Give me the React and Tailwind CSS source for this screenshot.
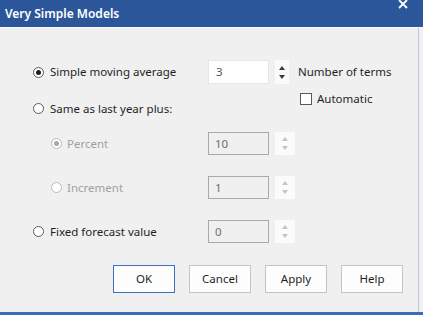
import React from 'react';

function Radio({ checked, disabled }) {
    const ring = disabled ? '#b9b9b9' : '#5a5a5a';
    const dot = disabled ? '#a8a8a8' : '#1f1f1f';
    return (
        <svg width="11" height="11" viewBox="0 0 11 11" className="shrink-0">
            <circle cx="5.5" cy="5.5" r="5" fill="#ffffff" stroke={ring} strokeWidth="1" />
            {checked && <circle cx="5.5" cy="5.5" r="2.5" fill={dot} />}
        </svg>
    );
}

function Spinner({ disabled, className }) {
    const c = disabled ? '#c4c4c4' : '#3a3a3a';
    return (
        <div className={`flex flex-col items-center justify-center gap-[5px] bg-[#fbfbfb] ${className}`}>
            <svg width="6" height="4" viewBox="0 0 6 4">
                <path d="M3 0 L6 4 L0 4 Z" fill={c} />
            </svg>
            <svg width="6" height="4" viewBox="0 0 6 4">
                <path d="M0 0 L6 0 L3 4 Z" fill={c} />
            </svg>
        </div>
    );
}

function DisabledField({ value }) {
    return (
        <div className="flex items-center">
            <div className="w-[61px] h-[23px] border border-[#a9a9a9] bg-[#f0f0f0] flex items-center pl-[6px] text-[#6e6e6e]">
                {value}
            </div>
            <Spinner disabled className="ml-[6px] w-[20px] h-[23px]" />
        </div>
    );
}

function Button({ label, primary }) {
    return (
        <button
            className={`w-[62px] h-[28px] bg-[#fdfdfd] border text-[#1f1f1f] ${
                primary ? 'border-[#3f70c0]' : 'border-[#c4c4c4]'
            }`}
        >
            {label}
        </button>
    );
}

export default function App() {
    return (
        <div className="w-[423px] h-[315px] bg-[#f0f0f0] flex flex-col font-['Noto_Sans',sans-serif] text-[11.5px] text-[#1f1f1f] overflow-hidden">
            {/* title bar */}
            <div className="h-[27px] bg-[#2b579a] flex items-start justify-between pl-[5px] pr-[15px] shrink-0">
                <span className="text-white font-semibold text-[12px] mt-[5px]">Very Simple Models</span>
                <svg width="10" height="9" viewBox="0 0 10 9" className="mt-[0px]">
                    <path d="M1 0 L9 8 M9 0 L1 8" stroke="#ffffff" strokeWidth="1.8" />
                </svg>
            </div>

            {/* body */}
            <div className="flex-1 flex flex-col border-t border-[#f7f9fc]">
                <div className="flex-1 flex flex-col mr-[4px] border-r border-[#b7c6dc] pl-[33px]">
                    {/* simple moving average */}
                    <div className="flex items-center h-[24px] mt-[32px]">
                        <div className="w-[175px] flex items-center gap-[6px]">
                            <Radio checked />
                            <span>Simple moving average</span>
                        </div>
                        <div className="w-[61px] h-[24px] bg-white border border-[#e6e6e6] flex items-center pl-[7px] text-[#555]">
                            3
                        </div>
                        <Spinner className="ml-[6px] w-[14px] h-[24px]" />
                        <span className="ml-[9px]">Number of terms</span>
                    </div>

                    {/* same as last year + automatic */}
                    <div className="flex items-start h-[26px] mt-[6px]">
                        <div className="w-[267px] flex items-center gap-[6px] mt-[10px]">
                            <Radio />
                            <span>Same as last year plus:</span>
                        </div>
                        <div className="flex items-center gap-[5px]">
                            <div className="w-[12px] h-[12px] bg-white border border-[#5a5a5a]" />
                            <span>Automatic</span>
                        </div>
                    </div>

                    {/* percent */}
                    <div className="flex items-center h-[23px] mt-[16px]">
                        <div className="w-[175px] flex items-center gap-[5px] pl-[18px] text-[#a0a0a0]">
                            <Radio checked disabled />
                            <span>Percent</span>
                        </div>
                        <DisabledField value="10" />
                    </div>

                    {/* increment */}
                    <div className="flex items-center h-[23px] mt-[21px]">
                        <div className="w-[175px] flex items-center gap-[5px] pl-[18px] text-[#a0a0a0]">
                            <Radio disabled />
                            <span>Increment</span>
                        </div>
                        <DisabledField value="1" />
                    </div>

                    {/* fixed forecast */}
                    <div className="flex items-center h-[23px] mt-[21px]">
                        <div className="w-[175px] flex items-center gap-[6px]">
                            <Radio />
                            <span>Fixed forecast value</span>
                        </div>
                        <DisabledField value="0" />
                    </div>

                    {/* buttons */}
                    <div className="flex gap-[14px] mt-[22px] ml-[80px]">
                        <Button label="OK" primary />
                        <Button label="Cancel" />
                        <Button label="Apply" />
                        <Button label="Help" />
                    </div>
                </div>
                <div className="h-[3px] bg-[#3c6cb4] shrink-0" />
            </div>
        </div>
    );
}
